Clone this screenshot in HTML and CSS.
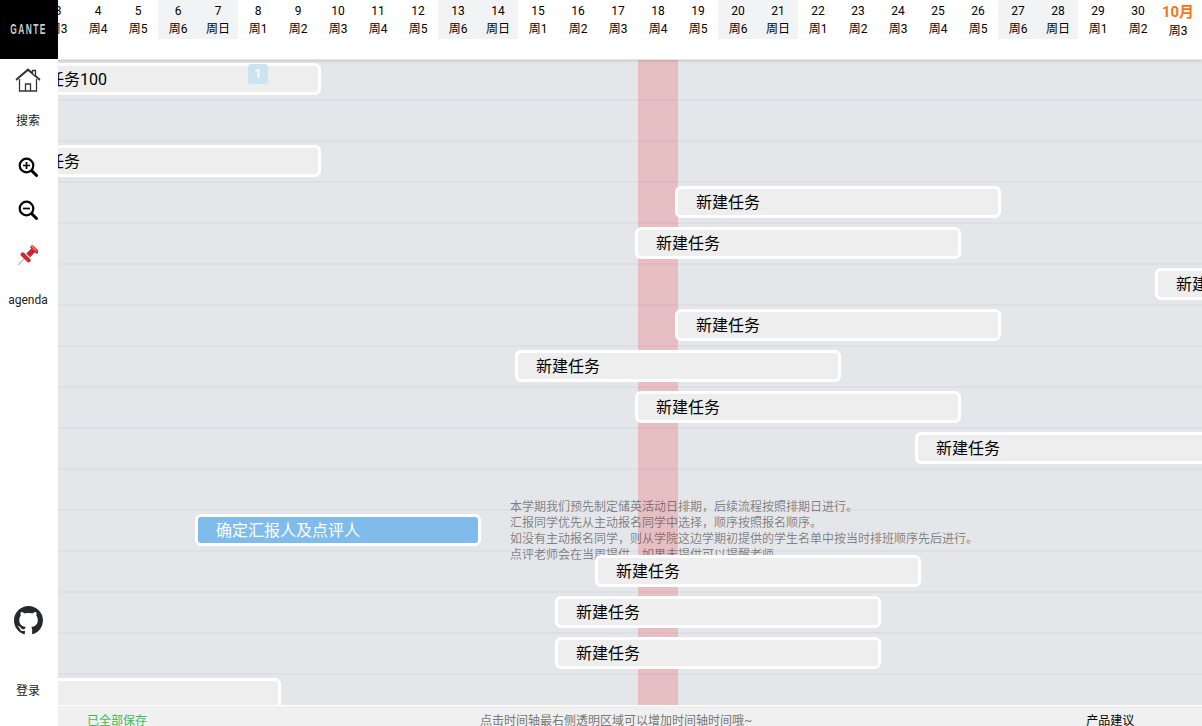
FILE: index.html
```html
<!DOCTYPE html>
<html lang="zh-CN">
<head>
<meta charset="utf-8">
<title>Gante</title>
<link rel="stylesheet" href="styles.css">
</head>
<body>
<div class="app">
  <aside class="sidebar">
    <div class="logo"><span class="logo-text">GANTE</span></div>
    <div class="side-item home">
      <svg width="26" height="24" viewBox="0 0 26 24" fill="none" stroke="#333" stroke-width="1.3"><path d="M1 11.5 13 1l4.5 4V2.5h3v5.2L25 11.5"/><path d="M1 12.2 13 2.2l12 10"/><path d="M4.5 11v12h17V11"/><path d="M10.5 23v-7h5v7"/></svg>
    </div>
    <div class="side-item label search">搜索</div>
    <div class="side-item zoom-in">
      <svg width="20" height="20" viewBox="0 0 20 20" fill="none" stroke="#000"><circle cx="8.5" cy="8.5" r="6.8" stroke-width="2.2"/><path d="M14 14l4.5 4.5" stroke-width="3" stroke-linecap="round"/><path d="M5 8.5h7M8.500 5v7" stroke-width="1.7"/></svg>
    </div>
    <div class="side-item zoom-out">
      <svg width="20" height="20" viewBox="0 0 20 20" fill="none" stroke="#000"><circle cx="8.500" cy="8.500" r="6.800" stroke-width="2.200"/><path d="M14 14l4.500 4.500" stroke-width="3" stroke-linecap="round"/><path d="M5 8.500h7" stroke-width="1.700"/></svg>
    </div>
    <div class="side-item pin">
      <svg width="20" height="20" viewBox="0 0 19 19" fill="none" stroke-linecap="round"><path d="M6 13 .5 18.500" stroke="#b5b5b5" stroke-width="1.100"/><path d="M4.500 9 10 14.500" stroke="#d4282c" stroke-width="4"/><path d="M13 4 9 8l2.500 2.500 4-4z" fill="#c8242a" stroke="#c8242a" stroke-width="1.500"/><path d="M13.500 2 18 6.500" stroke="#dc2f32" stroke-width="3.500"/><path d="M13.500 1.500 17 5" stroke="#f08a8a" stroke-width="1"/></svg>
    </div>
    <div class="side-item label agenda">agenda</div>
    <div class="side-spacer"></div>
    <div class="side-item github">
      <svg width="29" height="29" viewBox="0 0 16 16" fill="#24292e"><path fill-rule="evenodd" d="M8 0C3.580 0 0 3.580 0 8c0 3.540 2.290 6.530 5.470 7.590.4.070.55-.17.55-.38 0-.19-.01-.82-.01-1.490-2.010.37-2.530-.49-2.690-.94-.09-.23-.48-.94-.82-1.130-.28-.15-.68-.52-.01-.53.63-.01 1.080.58 1.230.82.72 1.210 1.870.87 2.330.66.070-.52.280-.87.510-1.070-1.780-.2-3.640-.89-3.640-3.950 0-.87.310-1.590.820-2.150-.080-.2-.36-1.020.080-2.120 0 0 .67-.21 2.200.82.640-.18 1.320-.27 2-.27.68 0 1.360.09 2 .27 1.530-1.040 2.200-.82 2.200-.82.440 1.100.160 1.920.080 2.120.510.560.820 1.270.820 2.150 0 3.070-1.870 3.750-3.650 3.950.290.250.540.730.540 1.480 0 1.070-.010 1.930-.010 2.200 0 .210.150.460.550.380A8.013 8.013 0 0 0 16 8c0-4.420-3.580-8-8-8z"/></svg>
    </div>
    <div class="side-item label login">登录</div>
  </aside>

  <main class="board">
    <header class="days">
      <div class="day"><b>3</b><span>周3</span></div>
      <div class="day"><b>4</b><span>周4</span></div>
      <div class="day"><b>5</b><span>周5</span></div>
      <div class="day weekend"><b>6</b><span>周6</span></div>
      <div class="day weekend"><b>7</b><span>周日</span></div>
      <div class="day"><b>8</b><span>周1</span></div>
      <div class="day"><b>9</b><span>周2</span></div>
      <div class="day"><b>10</b><span>周3</span></div>
      <div class="day"><b>11</b><span>周4</span></div>
      <div class="day"><b>12</b><span>周5</span></div>
      <div class="day weekend"><b>13</b><span>周6</span></div>
      <div class="day weekend"><b>14</b><span>周日</span></div>
      <div class="day"><b>15</b><span>周1</span></div>
      <div class="day"><b>16</b><span>周2</span></div>
      <div class="day"><b>17</b><span>周3</span></div>
      <div class="day"><b>18</b><span>周4</span></div>
      <div class="day"><b>19</b><span>周5</span></div>
      <div class="day weekend"><b>20</b><span>周6</span></div>
      <div class="day weekend"><b>21</b><span>周日</span></div>
      <div class="day"><b>22</b><span>周1</span></div>
      <div class="day"><b>23</b><span>周2</span></div>
      <div class="day"><b>24</b><span>周3</span></div>
      <div class="day"><b>25</b><span>周4</span></div>
      <div class="day"><b>26</b><span>周5</span></div>
      <div class="day weekend"><b>27</b><span>周6</span></div>
      <div class="day weekend"><b>28</b><span>周日</span></div>
      <div class="day"><b>29</b><span>周1</span></div>
      <div class="day"><b>30</b><span>周2</span></div>
      <div class="day month"><b>10月</b><span>周3</span></div>
    </header>

    <section class="chart">
      <div class="today"></div>
      <div class="row"><div class="bar" style="margin-left:-63px;width:326px">新建任务100<span class="badge">1</span></div></div>
      <div class="row"></div>
      <div class="row"><div class="bar" style="margin-left:-63px;width:326px">新建任务</div></div>
      <div class="row"><div class="bar" style="margin-left:617px;width:326px">新建任务</div></div>
      <div class="row"><div class="bar" style="margin-left:577px;width:326px">新建任务</div></div>
      <div class="row"><div class="bar" style="margin-left:1097px;width:326px">新建任务</div></div>
      <div class="row"><div class="bar" style="margin-left:617px;width:326px">新建任务</div></div>
      <div class="row"><div class="bar" style="margin-left:457px;width:326px">新建任务</div></div>
      <div class="row"><div class="bar" style="margin-left:577px;width:326px">新建任务</div></div>
      <div class="row"><div class="bar" style="margin-left:857px;width:326px">新建任务</div></div>
      <div class="row"></div>
      <div class="row"><div class="bar done" style="margin-left:137px;width:286px">确定汇报人及点评人</div></div>
      <div class="row"><div class="bar" style="margin-left:537px;width:326px">新建任务</div></div>
      <div class="row"><div class="bar" style="margin-left:497px;width:326px">新建任务</div></div>
      <div class="row"><div class="bar" style="margin-left:497px;width:326px">新建任务</div></div>
      <div class="row"><div class="bar" style="margin-left:-103px;width:326px"></div></div>
      <p class="note">本学期我们预先制定储英活动日排期，后续流程按照排期日进行。<br>汇报同学优先从主动报名同学中选择，顺序按照报名顺序。<br>如没有主动报名同学，则从学院这边学期初提供的学生名单中按当时排班顺序先后进行。<br>点评老师会在当周提供，如果未提供可以提醒老师。</p>
    </section>

    <footer class="footer">
      <span class="saved">已全部保存</span>
      <span class="tip">点击时间轴最右侧透明区域可以增加时间轴时间哦~</span>
      <span class="advice">产品建议</span>
    </footer>
  </main>
</div>
</body>
</html>
```

FILE: styles.css
```css
* { box-sizing: border-box; }
html, body { margin: 0; height: 100%; overflow: hidden; }
body { font-family: Roboto, "Noto Sans CJK SC", sans-serif; color: #000; background: #fff; }
.app { display: flex; height: 726px; overflow: hidden; }

.sidebar { flex: 0 0 58px; width: 58px; min-width: 0; display: flex; flex-direction: column; align-items: stretch; background: #fff; position: relative; z-index: 3; padding-right: 2px; }
.logo { flex: 0 0 59px; margin-right: -2px; padding-bottom: 3px; padding-right: 2px; background: #000; display: flex; align-items: center; justify-content: center; overflow: hidden; }
.logo-text { display: block; flex: none; font: bold 15px "Liberation Sans", sans-serif; letter-spacing: 2.5px; color: #ccc; transform: scaleX(.56); }
.side-item { display: flex; align-items: center; justify-content: center; }
.label { font-size: 12px; color: #222; }
.home { height: 42px; }
.search { height: 38px; padding-bottom: 2px; }
.zoom-in { height: 56px; }
.zoom-out { height: 30px; }
.pin { height: 60px; padding-bottom: 1px; }
.agenda { height: 30px; }
.side-spacer { flex: 1; }
.github { height: 40px; }
.login { height: 40px; margin: 30px 0 16px; padding-bottom: 2px; }

.board { flex: 1; min-width: 0; display: flex; flex-direction: column; position: relative; overflow: hidden; }
.days { flex: 0 0 60px; display: flex; margin-left: -20px; background: #fff; box-shadow: 0 1px 3px rgba(0,0,0,.15); position: relative; z-index: 2; align-items: flex-start; width: calc(100% + 20px); border-bottom: 1px solid #e5e6ea; }
.day { flex: 0 0 40px; height: 39px; display: flex; flex-direction: column; align-items: center; font-size: 12px; line-height: 18px; padding-top: 2px; }
.day b { font-weight: 400; }
.weekend { background: #f2f3f5; }
.month b { font-size: 15px; font-weight: 700; color: #f97316; line-height: 20px; }

.chart { flex: 1; min-height: 0; background: #e5e6ea; position: relative; overflow: hidden; }
.today { position: absolute; top: 0; bottom: 0; left: 580px; width: 40px; background: rgba(240,70,70,.25); }
.row { height: 41px; border-bottom: 2px solid #dddee6; padding-top: 3px; }
.bar { height: 32px; border: 3px solid #fff; border-radius: 6px; background: #eee; font-size: 16px; line-height: 28px; padding-left: 18px; white-space: nowrap; position: relative; z-index: 1; }
.done { background: #7fbcec; color: #fff; }
.badge { position: absolute; top: -2px; left: 250px; width: 20px; height: 20px; border-radius: 3px; background: #cde4f0; color: #fff; font-size: 12px; font-weight: 500; line-height: 20px; text-align: center; }
.note { position: absolute; margin: 0; left: 452px; top: 439px; font-size: 12px; line-height: 16px; color: rgba(60,60,60,.6); white-space: nowrap; }

.footer { flex: 0 0 21px; display: flex; background: #f0f0f0; border-top: 1px solid #fff; font-size: 12px; line-height: 16px; padding-top: 7px; position: relative; z-index: 2; overflow: hidden; }
.saved { margin-left: 29px; color: #3cb95a; }
.tip { margin-left: 333px; color: #777; }
.advice { margin-left: 334px; color: #000; }
```
